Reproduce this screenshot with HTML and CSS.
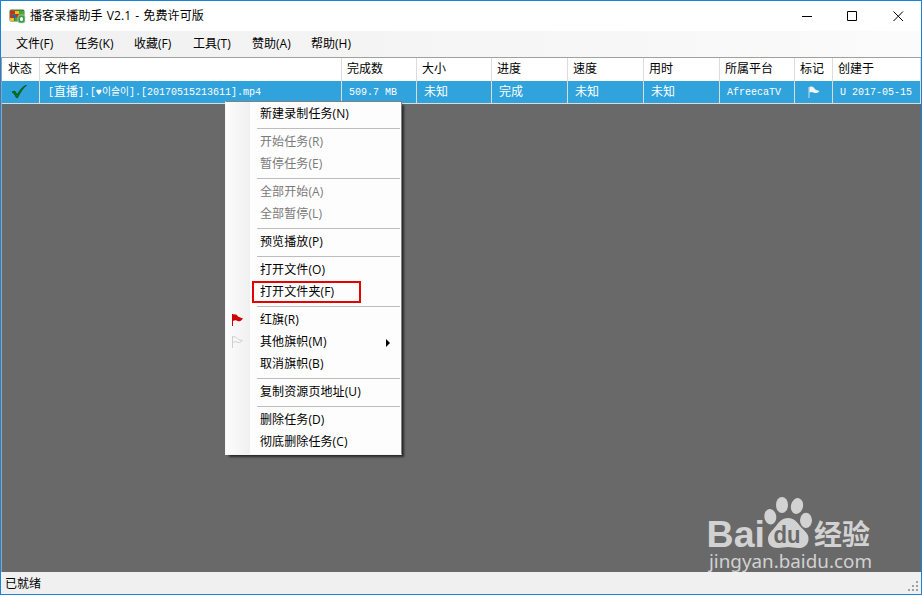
FILE: index.html
```html
<!DOCTYPE html>
<html lang="zh-CN">

<head>
    <meta charset="UTF-8">
    <meta name="viewport" content="width=device-width, initial-scale=1.0">
    <title>播客录播助手 V2.1 - 免费许可版</title>
    <link rel="stylesheet" href="styles.css">
</head>

<body>
    <div class="window">
        <header class="titlebar">
            <svg class="app-icon" width="17" height="16" viewBox="0 0 17 16">
                <rect x=".5" y="1.500" width="15" height="12" rx="1.500" fill="#4c7a3a"/>
                <path d="M1 3h5v3H1zM1 7h3v3H1zM7 6h3v3H7z" fill="#d5281e"/>
                <path d="M6 3h4v3H6zM1 10h4v3H1z" fill="#f0c020"/>
                <path d="M10 3h5v4h-5zM6 10h4v3H6z" fill="#46a83c"/>
                <path d="M4 7h3v3H4z" fill="#2865b8"/>
                <rect x="9" y="7" width="7" height="8" rx="2" fill="#3f9a48" stroke="#b9dcb6" stroke-width=".7"/>
                <rect x="11" y="9" width="3" height="4" rx="1.500" fill="#fff"/>
            </svg>
            <h1>播客录播助手 V2.1 - 免费许可版</h1>
            <div class="window-buttons">
                <svg width="11" height="11" viewBox="0 0 11 11"><path d="M1 5.500h10" stroke="#000"/></svg>
                <svg width="11" height="11" viewBox="0 0 11 11"><path d="M.5.500h9v9h-9z" fill="none" stroke="#000"/></svg>
                <svg width="11" height="11" viewBox="0 0 11 11"><path d="M.5.500l9.500 9.500M10 .5L.5 10" stroke="#000"/></svg>
            </div>
        </header>

        <nav class="menubar">
            <span>文件(F)</span>
            <span>任务(K)</span>
            <span>收藏(F)</span>
            <span>工具(T)</span>
            <span>赞助(A)</span>
            <span>帮助(H)</span>
        </nav>

        <main class="task-list">
            <div class="grid-row grid-head">
                <div>状态</div>
                <div>文件名</div>
                <div>完成数</div>
                <div>大小</div>
                <div>进度</div>
                <div>速度</div>
                <div>用时</div>
                <div>所属平台</div>
                <div>标记</div>
                <div>创建于</div>
            </div>
            <div class="grid-row grid-selected">
                <div class="icon-cell">
                    <svg class="check" width="17" height="14" viewBox="0 0 18 15"><path d="M1 7.500l3-1 2.500 4C9 6 12 2 16.500 0 13 3.500 9.500 8 7 13.500H5.500C4.500 11 3 8.500 1 7.500z" fill="#008000" stroke="#063c10" stroke-width=".7"/></svg>
                </div>
                <div class="file-name">[<b>直播</b>].[<i class="heart">♥</i><i class="korean">이슬이</i>].[20170515213611].mp4</div>
                <div>509.7 MB</div>
                <div><b>未知</b></div>
                <div><b>完成</b></div>
                <div><b>未知</b></div>
                <div><b>未知</b></div>
                <div>AfreecaTV</div>
                <div class="icon-cell">
                    <svg width="12" height="13" viewBox="0 0 12 13"><path d="M1 1v11" stroke="#d6dadd"/><path d="M1.500 1C4 0 5.500 1 6.500 2.500S9 4 11.500 5C9.500 7.500 7 7.500 5.500 6.500S3 6 1.500 6.500z" fill="#f4f4f4"/></svg>
                </div>
                <div>U 2017-05-15</div>
            </div>
        </main>

        <footer class="statusbar">
            <span>已就绪</span>
            <svg class="grip" width="11" height="11" viewBox="0 0 11 11"><path d="M8 0h2v2H8zM4 4h2v2H4zM8 4h2v2H8zM0 8h2v2H0zM4 8h2v2H4zM8 8h2v2H8z" fill="#a0a0a0"/></svg>
        </footer>

        <div class="context-menu">
            <div class="item">新建录制任务(N)</div>
            <hr>
            <div class="item disabled">开始任务(R)</div>
            <div class="item disabled">暂停任务(E)</div>
            <hr>
            <div class="item disabled">全部开始(A)</div>
            <div class="item disabled">全部暂停(L)</div>
            <hr>
            <div class="item">预览播放(P)</div>
            <hr>
            <div class="item">打开文件(O)</div>
            <div class="item marked">打开文件夹(F)</div>
            <hr>
            <div class="item">
                <svg class="flag" width="13" height="13" viewBox="0 0 13 13"><path d="M1 0h1v12H1z" fill="#c80000"/><path d="M2 0.500c2-.5 4 0 5 2 1.500 1 3 1 5 2-2 3-5 3.500-6.500 2C4.500 6 3 6.500 2 7z" fill="#d00000"/></svg>
                红旗(R)
            </div>
            <div class="item">
                <svg class="flag" width="13" height="13" viewBox="0 0 13 13"><path d="M1.500 0v12M1.500 1c2-.5 4 0 5 1.500 1.500 1.500 3 1.500 5 2-1.500 2-4 2.500-5.500 1.500S3 6 1.500 7" fill="none" stroke="#cfcfcf"/></svg>
                其他旗帜(M)
                <svg class="arrow" width="4" height="8" viewBox="0 0 4 8"><path d="M0 0l4 4-4 4z"/></svg>
            </div>
            <div class="item">取消旗帜(B)</div>
            <hr>
            <div class="item">复制资源页地址(U)</div>
            <hr>
            <div class="item">删除任务(D)</div>
            <div class="item">彻底删除任务(C)</div>
        </div>

        <svg class="watermark" width="180" height="90" viewBox="0 0 180 90">
            <g fill="#d2d2d2">
                <text class="brand" x="6.500" y="57" textLength="58.500" lengthAdjust="spacingAndGlyphs">Bai</text>
                <ellipse cx="70.300" cy="26.700" rx="6" ry="7.800" transform="rotate(-8 70.300 26.700)"/>
                <ellipse cx="82" cy="15" rx="6" ry="8"/>
                <ellipse cx="97" cy="16" rx="6" ry="8" transform="rotate(14 97 16)"/>
                <ellipse cx="106" cy="30.300" rx="6" ry="7.600"/>
                <path d="M88 28c6 0 9 4 12 8 4 5 9 7 8.500 13.500-.5 6-5 9-10.500 8.500-4 0-6-1-10-1s-6 1-10 1c-6 0-10-3-10-9 0-5 4-8 8-13 3-4 6-8 12-8z"/>
                <text class="brand-cn" x="114" y="55" textLength="56" lengthAdjust="spacingAndGlyphs">经验</text>
                <text class="site" x="9" y="78" textLength="163" lengthAdjust="spacingAndGlyphs">jingyan.baidu.com</text>
            </g>
            <text class="brand-du" x="73.500" y="53" textLength="27" lengthAdjust="spacingAndGlyphs">du</text>
        </svg>
    </div>
</body>

</html>
```
FILE: styles.css
```css
body {
    margin: 0;
    font-family: "Open Sans", "Noto Sans CJK SC", sans-serif;
    font-size: 12px;
    color: #000;
}

.window {
    position: relative;
    display: flex;
    flex-direction: column;
    width: 922px;
    height: 595px;
    box-sizing: border-box;
    border: 1px solid #1883d7;
    background-color: #696969;
    overflow: hidden;
}

.titlebar {
    display: flex;
    align-items: center;
    height: 30px;
    padding: 0 17px 0 8px;
    background-color: #fff;
}

.titlebar h1 {
    margin: 0 0 0 4px;
    font-size: 12px;
    font-weight: normal;
    line-height: 30px;
    letter-spacing: 0.1px;
    word-spacing: 0.9px;
    white-space: nowrap;
}

.window-buttons {
    display: flex;
    gap: 35px;
    margin-left: auto;
}

.menubar {
    display: flex;
    gap: 20px;
    height: 26px;
    padding-left: 15px;
    line-height: 26px;
    background: linear-gradient(to right, #f0f0f0, #fbfbfb);
}

.menubar span {
    width: 39px;
    white-space: nowrap;
}

.task-list {
    flex: 1;
    border-top: 1px solid #a0a0a0;
    border-left: 1px solid #a0a0a0;
}

.grid-row {
    display: grid;
    grid-template-columns: 38px 302px 75px 75px 76px 76px 76px 75px 38px 88px;
}

.grid-row > div {
    box-sizing: border-box;
    border-right: 1px solid #dcdcdc;
    white-space: nowrap;
    overflow: hidden;
}

.grid-head {
    height: 23px;
    line-height: 22px;
    background-color: #fff;
}

.grid-head > div {
    padding-left: 5px;
}

.grid-head > div:first-child {
    padding-left: 6px;
}

.grid-selected {
    height: 23px;
    line-height: 24px;
    border-bottom: 1px solid #dcdcdc;
    box-sizing: border-box;
    background-color: #30a2dc;
    color: #fff;
    font-family: "Liberation Mono", "Noto Sans CJK SC", monospace;
    font-size: 10px;
}

.grid-selected > div {
    height: 22px;
    padding-left: 7px;
}

.grid-selected .file-name {
    padding-left: 8px;
}

.grid-selected b {
    position: relative;
    top: 1px;
    font-size: 12px;
    font-weight: normal;
    line-height: 1;
}

.grid-selected i {
    display: inline-block;
    font-style: normal;
    line-height: 1;
}

.grid-selected .heart {
    width: 6px;
}

.grid-selected .korean {
    width: 27px;
    font-family: "Noto Sans CJK KR", sans-serif;
    font-size: 9.800px;
}

.grid-selected .icon-cell {
    display: flex;
    align-items: center;
    justify-content: center;
    padding: 0;
}

.check {
    margin-right: 2px;
}

.statusbar {
    display: flex;
    justify-content: space-between;
    height: 22px;
    padding: 0 2px 0 4px;
    line-height: 24px;
    background-color: #f0f0f0;
}

.grip {
    align-self: flex-end;
    margin-bottom: 2px;
}

/* right-click menu */
.context-menu {
    position: absolute;
    left: 224px;
    top: 100px;
    width: 177px;
    box-sizing: border-box;
    padding: 1px 0;
    border: 1px solid #808080;
    border-left-color: #f4f4f4;
    border-bottom-color: #f4f4f4;
    background: linear-gradient(to right, #fcfcfc, #f0f0f0 24px, #fdfdfd 24px);
    box-shadow: 3px 3px 2px -1px rgba(0, 0, 0, 0.6);
}

.item {
    position: relative;
    height: 22px;
    padding-left: 34px;
    line-height: 22px;
    letter-spacing: 0.1px;
    white-space: nowrap;
}

.disabled {
    color: #7a7a7a;
}

.context-menu hr {
    height: 1px;
    margin: 3px 1px 2px 31px;
    border: 0;
    background-color: #bdbdbd;
}

.marked::before {
    content: "";
    position: absolute;
    left: 26px;
    top: 0;
    width: 105px;
    height: 18px;
    border: 2px solid #e60000;
}

.flag {
    position: absolute;
    left: 5px;
    top: 5px;
}

.arrow {
    position: absolute;
    right: 11px;
    top: 8px;
}

.watermark {
    position: absolute;
    left: 699px;
    top: 489px;
}

.brand,
.brand-du {
    font-family: "Liberation Sans", sans-serif;
    font-weight: bold;
    font-size: 37px;
}

.brand-du {
    font-size: 23px;
    fill: #696969;
}

.brand-cn {
    font-family: "Noto Sans CJK SC", sans-serif;
    font-weight: bold;
    font-size: 28px;
}

.site {
    font-family: "Noto Sans", sans-serif;
    font-size: 18px;
}
```
